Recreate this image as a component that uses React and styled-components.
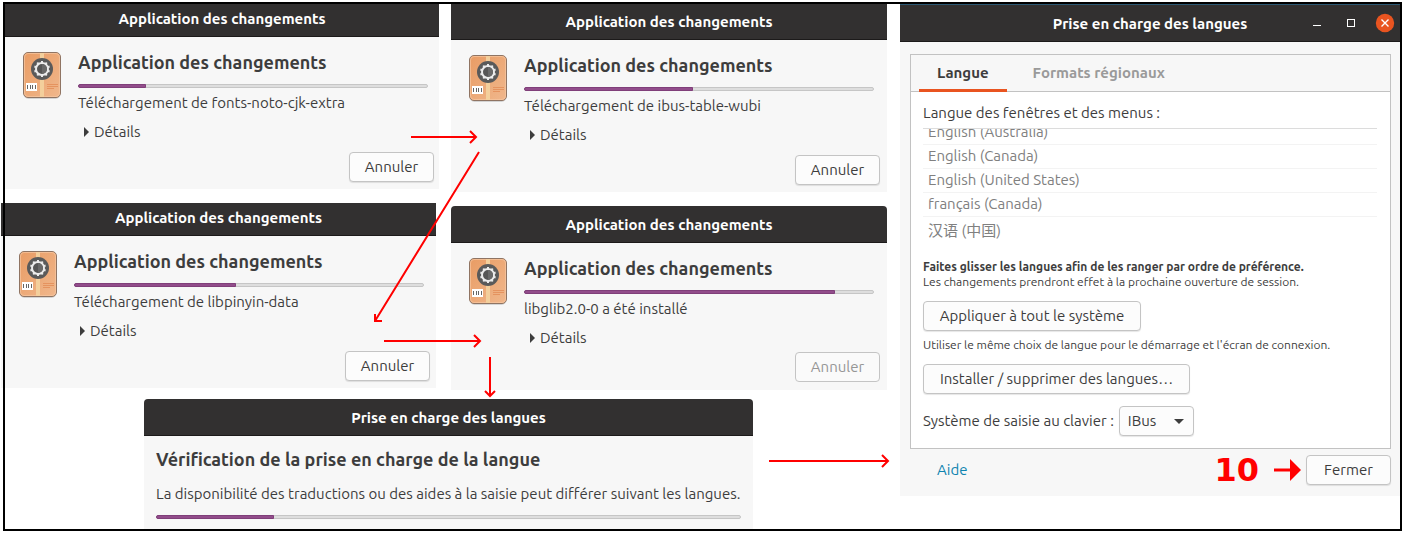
import React from "react";
import styled, { createGlobalStyle } from "styled-components";

const GlobalStyle = createGlobalStyle`
  * { box-sizing: border-box; }
  body {
    margin: 0;
    background: #ffffff;
    color: #3d3d3d;
    font-family: Ubuntu, "Noto Sans", "Noto Sans CJK SC", sans-serif;
    font-size: 15px;
    line-height: 20px;
  }
  h1, h2, h3, p, ul { margin: 0; padding: 0; }
  button, select { font: inherit; color: inherit; }
`;

const Board = styled.main`
  position: relative;
  min-width: 1380px;
  min-height: 534px;
  overflow: hidden;
`;

const BoardFrame = styled.div`
  position: absolute;
  inset: 2px 4px 3px 3px;
  border: 2px solid #000000;
  pointer-events: none;
`;

const Window = styled.section`
  position: absolute;
  left: ${(p) => p.$x}px;
  top: ${(p) => p.$y}px;
  width: ${(p) => (p.$w ? `${p.$w}px` : "auto")};
  right: ${(p) => (p.$w ? "auto" : "6px")};
  background: #f7f7f7;
  border-radius: ${(p) => (p.$rounded ? "4px 4px 0 0" : "0")};
`;

const TitleBar = styled.header`
  display: flex;
  align-items: flex-end;
  justify-content: center;
  position: relative;
  height: ${(p) => p.$h}px;
  overflow: hidden;
  background: #323030;
  border-bottom: 1px solid #1c1a1a;
  border-top: ${(p) => (p.$edge ? "1px solid #2b5873" : "0")};
  border-radius: inherit;
`;

const Title = styled.h1`
  color: #ffffff;
  font-size: 15px;
  font-weight: 700;
  line-height: 34px;
`;

const DialogBody = styled.div`
  display: grid;
  grid-template-columns: 38px 350px;
  column-gap: 17px;
  padding: 13px 0 ${(p) => (p.$compact ? 8 : 7)}px 18px;
`;

const DialogText = styled.div`
  display: flex;
  flex-direction: column;
`;

const Heading = styled.h2`
  font-size: 18px;
  font-weight: 700;
  line-height: 24px;
  margin-bottom: 10px;
`;

const Trough = styled.div`
  height: 4px;
  background: #dedede;
  border: 1px solid #c6c6c6;
  border-radius: 2px;
`;

const Fill = styled.div`
  height: 4px;
  margin: -1px 0 0 -1px;
  background: #924d8b;
  border: 1px solid #803f7a;
  border-radius: 2px 0 0 2px;
`;

const Message = styled.p`
  margin-top: 5px;
`;

const Details = styled.details`
  margin-top: 9px;
`;

const Summary = styled.summary`
  display: flex;
  align-items: center;
  gap: 5px;
  padding-left: 6px;
  list-style: none;
  &::-webkit-details-marker { display: none; }
`;

const Actions = styled.div`
  grid-column: 1 / -1;
  display: flex;
  justify-content: flex-end;
  margin: ${(p) => (p.$compact ? 4 : 10)}px -6px 0 0;
`;

const Button = styled.button`
  width: ${(p) => p.$w || 85}px;
  height: 30px;
  padding: 0;
  background: #fcfcfc;
  border: 1px solid #c4c4c4;
  border-radius: 4px;
  box-shadow: 0 1px 1px rgba(0, 0, 0, 0.1);
  white-space: nowrap;
  &:disabled {
    color: #969696;
    background: #fafafa;
    box-shadow: none;
  }
`;

const PackageSvg = styled.svg`
  display: block;
  margin-top: 2px;
`;

const CheckBody = styled.div`
  height: 93px;
  padding: 11px 12px 0;
  overflow: hidden;
`;

const CheckText = styled.p`
  margin: 13px 0 11px;
  white-space: nowrap;
`;

const Controls = styled.div`
  position: absolute;
  right: 5px;
  top: 8px;
  display: flex;
  gap: 14px;
`;

const Control = styled.button`
  display: block;
  width: 20px;
  height: 20px;
  padding: 0;
  border: 0;
  background: none;
`;

const SettingsBody = styled.div`
  padding: 12px 9px 11px 10px;
`;

const Notebook = styled.div`
  background: #ffffff;
  border: 1px solid #c2c2c2;
`;

const Tabs = styled.div`
  display: flex;
  gap: 8px;
  height: 37px;
  padding-left: 8px;
  background: #f7f7f7;
  border-bottom: 1px solid #c2c2c2;
`;

const Tab = styled.button`
  height: 37px;
  padding: 2px 18px 0;
  border: 0;
  border-bottom: 3px solid ${(p) => (p.$active ? "#e95420" : "transparent")};
  background: none;
  color: ${(p) => (p.$active ? "#3d3d3d" : "#9a9a9a")};
  font-weight: 700;
  white-space: nowrap;
`;

const Panel = styled.div`
  display: flex;
  flex-direction: column;
  align-items: flex-start;
  padding: 11px 13px 12px 12px;
`;

const LanguageList = styled.ul`
  display: flex;
  flex-direction: column;
  justify-content: flex-end;
  align-self: stretch;
  height: 121px;
  margin-top: 5px;
  overflow: hidden;
  border-top: 1px solid #dcdcdc;
  list-style: none;
`;

const Language = styled.li`
  flex: none;
  height: ${(p) => (p.$tall ? 32 : 24)}px;
  padding-left: 5px;
  border-bottom: ${(p) => (p.$tall ? "0" : "1px solid #f3f3f3")};
  color: #808080;
  line-height: ${(p) => (p.$tall ? 28 : 22)}px;
`;

const Hint = styled.p`
  font-size: 12px;
  line-height: 15px;
  margin-top: ${(p) => p.$gap || 0}px;
  margin-bottom: ${(p) => p.$after || 0}px;
  font-weight: ${(p) => (p.$bold ? 700 : 400)};
  white-space: nowrap;
`;

const InputRow = styled.div`
  display: flex;
  align-items: center;
  gap: 5px;
  margin-top: 12px;
`;

const InputLabel = styled.label`
  white-space: nowrap;
`;

const SelectBox = styled.div`
  position: relative;
  width: 75px;
  height: 30px;
`;

const Select = styled.select`
  appearance: none;
  width: 100%;
  height: 100%;
  padding: 0 8px;
  background: #fcfcfc;
  border: 1px solid #c4c4c4;
  border-radius: 4px;
  box-shadow: 0 1px 1px rgba(0, 0, 0, 0.1);
`;

const SelectArrow = styled.svg`
  position: absolute;
  right: 10px;
  top: 13px;
  pointer-events: none;
`;

const Footer = styled.footer`
  display: flex;
  align-items: center;
  justify-content: space-between;
  padding: 6px 0 0 27px;
`;

const HelpLink = styled.a`
  color: #0f84b0;
  text-decoration: none;
`;

const Arrows = styled.svg`
  position: absolute;
  left: 0;
  top: 0;
  pointer-events: none;
`;

const StepMark = styled.div`
  position: absolute;
  right: 98px;
  bottom: 8px;
  display: flex;
  align-items: center;
  gap: 15px;
  color: #ff0000;
  font-family: "DejaVu Sans", sans-serif;
  font-size: 32px;
  font-weight: 700;
  line-height: 36px;
`;

const teeth = Array.from({ length: 10 }, (_, i) => i * 36);

function PackageIcon({ id }) {
  return (
    <PackageSvg width="38" height="48" viewBox="0 0 38 48" aria-hidden="true">
      <defs>
        <linearGradient id={id} x1="0" y1="0" x2="1" y2="1">
          <stop offset="0" stopColor="#e99c64" />
          <stop offset="1" stopColor="#f0b78c" />
        </linearGradient>
      </defs>
      <rect x="0.5" y="1.5" width="37" height="45.5" rx="5" fill="#000" opacity="0.14" />
      <rect x="0.5" y="0.5" width="37" height="45" rx="4.5" fill={`url(#${id})`} stroke="#8f7463" />
      <rect x="1.5" y="1.5" width="35" height="43" rx="3.5" fill="none" stroke="#f6c8a3" strokeOpacity="0.7" />
      <rect x="17" y="1" width="4" height="44" fill="#f3cf9c" />
      <circle cx="19" cy="17" r="11" fill="#5a5a5a" />
      <circle cx="19" cy="17" r="6" fill="#565656" stroke="#ececec" strokeWidth="2" />
      {teeth.map((a) => (
        <rect key={a} x="18" y="9" width="2" height="2" fill="#ececec" transform={`rotate(${a} 19 17)`} />
      ))}
      <path d="M19 12a5 5 0 0 1 0 10z" fill="#696969" />
      <rect x="3" y="31" width="11" height="8" fill="#ffffff" />
      <path d="M4.5 33v4M7.5 33v4M9.5 33v4M12.5 33v4" stroke="#666" strokeWidth="1" />
      <path d="M24 32.5h11M24 34.5h11M24 36.5h7" stroke="#e5935f" strokeWidth="1" />
    </PackageSvg>
  );
}

function Progress({ value, label }) {
  return (
    <Trough role="progressbar" aria-label={label} aria-valuenow={value} aria-valuemin={0} aria-valuemax={100}>
      <Fill style={{ width: `${value}%` }} />
    </Trough>
  );
}

function ApplyDialog({ id, x, y, w, bar, message, value, rounded, done }) {
  return (
    <Window $x={x} $y={y} $w={w} $rounded={rounded}>
      <TitleBar $h={bar}>
        <Title>Application des changements</Title>
      </TitleBar>
      <DialogBody $compact={done}>
        <PackageIcon id={id} />
        <DialogText>
          <Heading>Application des changements</Heading>
          <Progress value={value} label={message} />
          <Message>{message}</Message>
          <Details>
            <Summary>
              <svg width="5" height="10" viewBox="0 0 5 10" aria-hidden="true">
                <path d="M0 0L5 5L0 10z" fill="#3d3d3d" />
              </svg>
              Détails
            </Summary>
          </Details>
        </DialogText>
        <Actions $compact={done}>
          <Button type="button" disabled={done}>Annuler</Button>
        </Actions>
      </DialogBody>
    </Window>
  );
}

function CheckDialog() {
  return (
    <Window $x={144} $y={399} $w={609} $rounded>
      <TitleBar $h={37}>
        <Title>Prise en charge des langues</Title>
      </TitleBar>
      <CheckBody>
        <Heading>Vérification de la prise en charge de la langue</Heading>
        <CheckText>La disponibilité des traductions ou des aides à la saisie peut différer suivant les langues.</CheckText>
        <Progress value={20.3} label="Vérification" />
      </CheckBody>
    </Window>
  );
}

function SettingsWindow() {
  return (
    <Window $x={900} $y={4}>
      <TitleBar $h={38} $edge>
        <Title>Prise en charge des langues</Title>
        <Controls>
          <Control type="button" aria-label="Réduire">
            <svg width="20" height="20"><path d="M6 12.5h8" stroke="#fff" /></svg>
          </Control>
          <Control type="button" aria-label="Agrandir">
            <svg width="20" height="20"><rect x="6.5" y="6.5" width="7" height="7" fill="none" stroke="#fff" /></svg>
          </Control>
          <Control type="button" aria-label="Fermer la fenêtre">
            <svg width="20" height="20">
              <circle cx="10" cy="10" r="9.2" fill="#e95420" />
              <path d="M6.5 6.5l7 7M13.5 6.5l-7 7" stroke="#fff" strokeWidth="1.4" />
            </svg>
          </Control>
        </Controls>
      </TitleBar>
      <SettingsBody>
        <Notebook>
          <Tabs role="tablist">
            <Tab type="button" role="tab" aria-selected="true" $active>Langue</Tab>
            <Tab type="button" role="tab" aria-selected="false">Formats régionaux</Tab>
          </Tabs>
          <Panel role="tabpanel">
            <p>Langue des fenêtres et des menus :</p>
            <LanguageList>
              <Language>English (Australia)</Language>
              <Language>English (Canada)</Language>
              <Language>English (United States)</Language>
              <Language>français (Canada)</Language>
              <Language $tall lang="zh-CN">汉语 (中国)</Language>
            </LanguageList>
            <Hint $bold $gap={10}>Faites glisser les langues afin de les ranger par ordre de préférence.</Hint>
            <Hint $after={12}>Les changements prendront effet à la prochaine ouverture de session.</Hint>
            <Button type="button" $w={218}>Appliquer à tout le système</Button>
            <Hint $gap={6} $after={12}>Utiliser le même choix de langue pour le démarrage et l'écran de connexion.</Hint>
            <Button type="button" $w={267}>Installer / supprimer des langues…</Button>
            <InputRow>
              <InputLabel htmlFor="input-system">Système de saisie au clavier :</InputLabel>
              <SelectBox>
                <Select id="input-system" defaultValue="IBus">
                  <option>IBus</option>
                </Select>
                <SelectArrow width="10" height="5" aria-hidden="true">
                  <path d="M0 0h10L5 5z" fill="#3d3d3d" />
                </SelectArrow>
              </SelectBox>
            </InputRow>
          </Panel>
        </Notebook>
        <Footer>
          <HelpLink href="#aide">Aide</HelpLink>
          <Button type="button">Fermer</Button>
        </Footer>
      </SettingsBody>
      <StepMark>
        10
        <svg width="28" height="22" aria-hidden="true">
          <path d="M0 11h17" stroke="#f00" strokeWidth="3" />
          <path d="M16 0L27 11L16 22z" fill="#f00" />
        </svg>
      </StepMark>
    </Window>
  );
}

const flow = [
  "M411 137H476M470 131l6 6l-6 6",
  "M479 152L375 321M375 314v7h7",
  "M384 341H480M474 335l6 6l-6 6",
  "M490 357V396M485 391l5 5l5 -5",
  "M769 461H888M882 455l6 6l-6 6",
];

export default function App() {
  return (
    <>
      <GlobalStyle />
      <Board>
        <ApplyDialog id="pkg-a" x={5} y={4} w={434} bar={33} value={19.6} message="Téléchargement de fonts-noto-cjk-extra" />
        <ApplyDialog id="pkg-b" x={451} y={4} w={436} bar={36} value={48.6} message="Téléchargement de ibus-table-wubi" />
        <ApplyDialog id="pkg-c" x={1} y={203} w={435} bar={33} value={46.6} message="Téléchargement de libpinyin-data" />
        <ApplyDialog id="pkg-d" x={451} y={206} w={436} bar={37} value={89.4} message="libglib2.0-0 a été installé" rounded done />
        <CheckDialog />
        <SettingsWindow />
        <BoardFrame />
        <Arrows width="900" height="534" aria-hidden="true">
          {flow.map((d) => (
            <path key={d} d={d} fill="none" stroke="#ff0000" strokeWidth="2" />
          ))}
        </Arrows>
      </Board>
    </>
  );
}
